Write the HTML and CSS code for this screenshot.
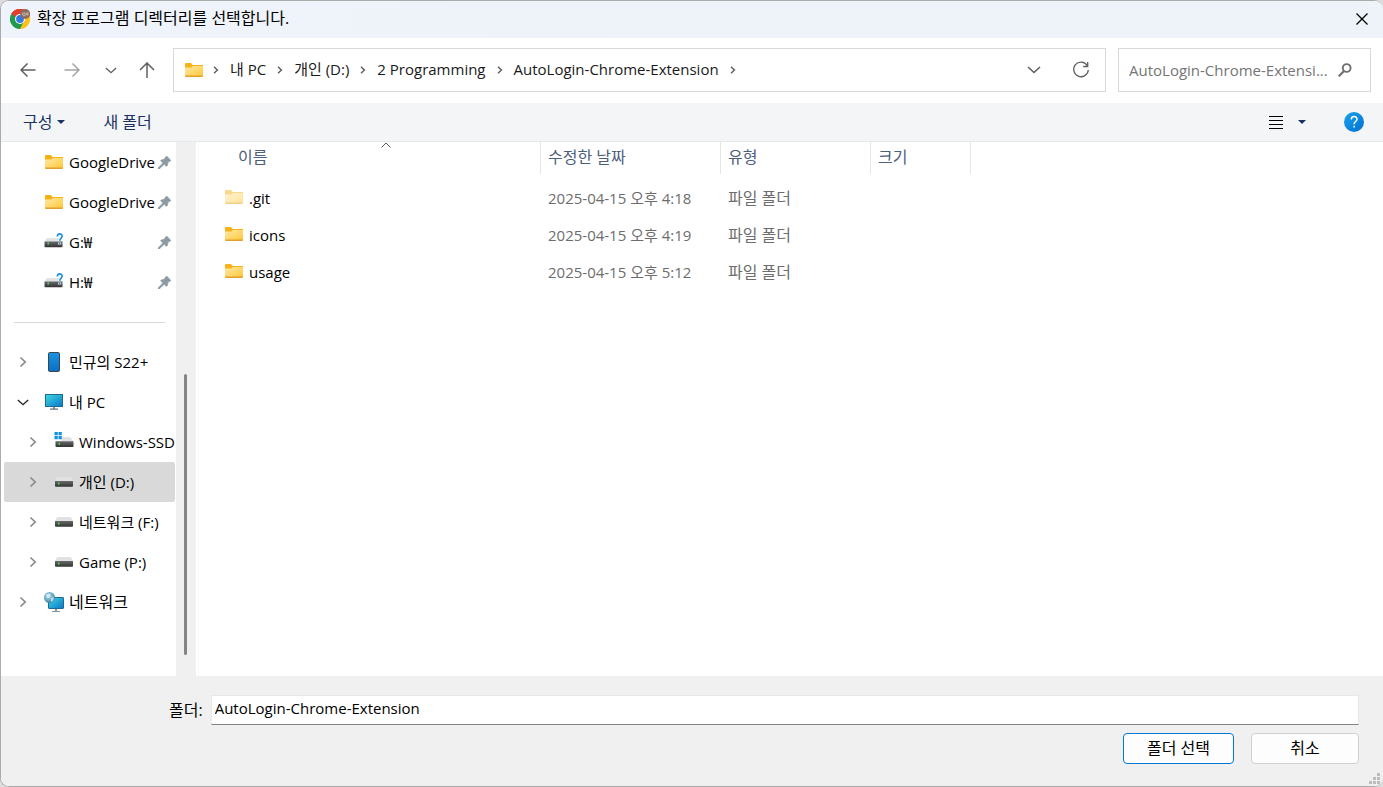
FILE: index.html
```html
<!DOCTYPE html>
<html lang="ko">
<head>
<meta charset="utf-8">
<title>확장 프로그램 디렉터리를 선택합니다.</title>
<link rel="stylesheet" href="styles.css">
</head>
<body>
<svg class="sprite" aria-hidden="true">
  <defs>
    <linearGradient id="g-folder" x1="0" y1="0" x2="1" y2="1"><stop offset="0" stop-color="#ffe9a6"/><stop offset="1" stop-color="#ffc83a"/></linearGradient>
    <linearGradient id="g-phone" x1="0" y1="0" x2="0" y2="1"><stop offset="0" stop-color="#1a93e0"/><stop offset="1" stop-color="#0a6fc4"/></linearGradient>
    <linearGradient id="g-screen" x1="0" y1="0" x2="1" y2="1"><stop offset="0" stop-color="#3ddbe0"/><stop offset="1" stop-color="#0b74c9"/></linearGradient>
    <linearGradient id="g-drive" x1="0" y1="0" x2="0" y2="1"><stop offset="0" stop-color="#6a6a6a"/><stop offset="1" stop-color="#333"/></linearGradient>
    <linearGradient id="g-help" x1="0" y1="0" x2="1" y2="1"><stop offset="0" stop-color="#1ba1ea"/><stop offset="1" stop-color="#0071d1"/></linearGradient>
    <radialGradient id="g-globe" cx=".4" cy=".35" r=".7"><stop offset="0" stop-color="#b5dcec"/><stop offset="1" stop-color="#2f83ad"/></radialGradient>
    <symbol id="folder" viewBox="0 0 18 14"><path d="M0 1q0-1 1-1h5l1.500 2H18v6H0z" fill="#f7b21a"/><path d="M0 4.500h6.500L8 3h10v10H0z" fill="url(#g-folder)"/><path d="M0 12.500h18v.5q0 1-1 1H1q-1 0-1-1z" fill="#e3a025"/></symbol>
    <symbol id="drive" viewBox="0 0 18 10"><path d="M3 0h12q1 0 1.500 1L18 4H0l1.500-3Q2 0 3 0z" fill="#e0e2e4"/><path d="M0 4h18v5q0 .8-.8.8H.8Q0 9.800 0 9z" fill="url(#g-drive)"/><rect x="3" y="5.500" width="1.500" height="2" fill="#4be04b"/></symbol>
    <symbol id="drive-unknown" viewBox="0 0 19 15"><path d="M3 5h12q1 0 1.500 1L18 9H0l1.500-3Q2 5 3 5z" fill="#e0e2e4"/><path d="M0 8.500h18v5q0 .8-.8.8H.8q-.8 0-.8-.8z" fill="url(#g-drive)"/><rect x="3" y="9.500" width="1.500" height="2" fill="#4be04b"/><path d="M12.800 3.500C12.800 0 17.600 0 17.600 3.200c0 2.200-2.400 2.300-2.400 4.600M15.200 9.500v2" fill="none" stroke="#fff" stroke-width="3"/><path d="M12.800 3.500C12.800 0 17.600 0 17.600 3.200c0 2.200-2.400 2.300-2.400 4.600M15.200 9.500v1.700" fill="none" stroke="#1a8fe0" stroke-width="1.600"/></symbol>
    <symbol id="drive-windows" viewBox="0 0 19 16"><path d="M7 5h8q1 0 1.500 1L19 9.500H1V9h6z" fill="#e0e2e4"/><path d="M1 9.200h18v5q0 .8-.8.8H1.800q-.8 0-.8-.8z" fill="url(#g-drive)"/><rect x="4" y="10.800" width="1.500" height="2" fill="#4be04b"/><path d="M0 0h3.300v3.300H0zM4 0h3.300v3.300H4zM0 4h3.300v3.300H0zM4 4h3.300v3.300H4z" fill="#1490df"/></symbol>
    <symbol id="phone" viewBox="0 0 12 20"><rect x=".5" y=".5" width="11" height="19" rx="1.200" fill="url(#g-phone)" stroke="#3d4650"/></symbol>
    <symbol id="pc" viewBox="0 0 18 16"><rect x=".5" y=".5" width="17" height="12" fill="url(#g-screen)" stroke="#1d6a94"/><path d="M8 13h2v2H8z" fill="#8c959c"/><path d="M5 14.500h8v1.200H5z" fill="#626c74"/></symbol>
    <symbol id="network" viewBox="0 0 20 20"><rect x="4.500" y="5.500" width="15" height="11" rx=".5" fill="url(#g-screen)" stroke="#1d6a94"/><path d="M11 17h2v2h3v1H8v-1h3z" fill="#8c959c"/><circle cx="5.500" cy="5.500" r="5.500" fill="url(#g-globe)"/><path d="M2 2.500l3-1 2 1.500-1.500 3L3 6zM7 6l3-1-1 4-2 1z" fill="#e5f4f8" opacity=".7"/></symbol>
    <symbol id="pin" viewBox="0 0 13 13"><path d="M7.800.6Q8.400-.1 9.100.5L12.500 3.900Q13.200 4.600 12.400 5L10 6.300 9.400 9.600Q8.800 10.700 7.900 9.900L6.200 8.300 1.300 13H0v-1L4.800 6.900 2.900 5.100Q2.300 4.300 3.300 4L6.600 3z" fill="#8e9aa3" stroke="#8e9aa3" stroke-width=".6"/></symbol>
    <symbol id="chevron" viewBox="0 0 8 12"><path d="M1.500 1.500L6.200 6l-4.700 4.500" fill="none" stroke="currentColor" stroke-width="1.700"/></symbol>
    <symbol id="chevron-small" viewBox="0 0 6 8"><path d="M1 .8L4.400 4 1 7.200" fill="none" stroke="currentColor" stroke-width="1.500"/></symbol>
    <symbol id="chevron-down" viewBox="0 0 14 8"><path d="M1 1l6 5.500L13 1" fill="none" stroke="currentColor" stroke-width="1.600"/></symbol>
    <symbol id="arrow" viewBox="0 0 16 14"><path d="M15.500 7H1M7.500.5L1 7l6.500 6.500" fill="none" stroke="currentColor" stroke-width="1.500"/></symbol>
  </defs>
</svg>

<div class="dialog" role="dialog" aria-labelledby="dialog-title">
  <header class="titlebar">
    <svg class="app-icon" viewBox="0 0 20 20" width="20" height="20" aria-hidden="true">
      <path d="M10 10L1.300 5A10 10 0 0 1 18.700 5z" fill="#e33b2e"/>
      <path d="M10 10L10 20A10 10 0 0 1 1.300 5z" fill="#229a4b"/>
      <path d="M10 10L18.700 5A10 10 0 0 1 10 20z" fill="#fbc116"/>
      <path d="M1.300 5L6 12.200 10 10 10 5.500z" fill="#229a4b"/>
      <path d="M1.300 5A10 10 0 0 1 18.700 5H10L6 8z" fill="#e33b2e"/>
      <path d="M14 12L10 20 6 13z" fill="#229a4b"/>
      <circle cx="10" cy="10" r="5" fill="#fff"/><circle cx="10" cy="10" r="3.900" fill="#3178e8"/>
      <circle cx="15.200" cy="5" r="5" fill="#8c6a5e"/>
      <path d="M12 3.500l1.200 1.300-1.200 1.300M14.200 3.300v2.200M13 6.700h2.500M15.500 4.200h1.500M17.800 3.200v3.500M15.500 5.500h1.800" stroke="#e8dcd8" stroke-width=".7" fill="none"/>
    </svg>
    <h1 id="dialog-title">확장 프로그램 디렉터리를 선택합니다.</h1>
    <button class="close" aria-label="닫기"><svg viewBox="0 0 12 12" width="12" height="12"><path d="M.5.5l11 11M11.500.5l-11 11" stroke="#000" stroke-width="1.300"/></svg></button>
  </header>

  <div class="navbar">
    <div class="history">
      <button aria-label="뒤로"><svg width="16" height="14"><use href="#arrow"/></svg></button>
      <button aria-label="앞으로" disabled><svg class="flip" width="16" height="14"><use href="#arrow"/></svg></button>
      <button class="recent" aria-label="최근 위치"><svg width="12" height="7"><use href="#chevron-down"/></svg></button>
      <button class="up" aria-label="위로"><svg width="16" height="16" viewBox="0 0 16 16"><path d="M8 16V1M1 8l7-7 7 7" fill="none" stroke="currentColor" stroke-width="1.500"/></svg></button>
    </div>
    <nav class="address" aria-label="주소">
      <svg class="address-icon" width="18" height="14" aria-hidden="true"><use href="#folder"/></svg>
      <ol class="crumbs">
        <li><svg width="6" height="8"><use href="#chevron-small"/></svg><a href="#">내 PC</a></li>
        <li><svg width="6" height="8"><use href="#chevron-small"/></svg><a href="#">개인 (D:)</a></li>
        <li><svg width="6" height="8"><use href="#chevron-small"/></svg><a href="#">2 Programming</a></li>
        <li><svg width="6" height="8"><use href="#chevron-small"/></svg><a href="#">AutoLogin-Chrome-Extension</a></li>
        <li><svg width="6" height="8"><use href="#chevron-small"/></svg></li>
      </ol>
      <button aria-label="이전 위치"><svg width="14" height="8"><use href="#chevron-down"/></svg></button>
      <button aria-label="새로 고침"><svg width="18" height="18" viewBox="0 0 18 18"><path d="M15.200 4.500A7.300 7.300 0 1 0 16.300 9M15.700 1v4.500h-4.500" fill="none" stroke="currentColor" stroke-width="1.300"/></svg></button>
    </nav>
    <label class="search">
      <input type="text" aria-label="검색" placeholder="AutoLogin-Chrome-Extensi...">
      <svg width="14" height="14" viewBox="0 0 14 14" aria-hidden="true"><circle cx="8.700" cy="5" r="3.900" fill="none" stroke="#6f6f6f" stroke-width="1.900"/><path d="M6 8L.7 13.300" stroke="#6f6f6f" stroke-width="2.200"/></svg>
    </label>
  </div>

  <div class="toolbar">
    <button class="organize">구성<svg width="8" height="4" viewBox="0 0 8 4"><path d="M0 0h8L4 4z" fill="#1b3260"/></svg></button>
    <button>새 폴더</button>
    <div class="toolbar-right">
      <button aria-label="보기"><svg width="14" height="14" viewBox="0 0 14 14"><path d="M0 1.500h14M0 5.500h14M0 9.500h14M0 13.500h14" stroke="#000"/></svg></button>
      <button aria-label="보기 옵션"><svg width="8" height="4" viewBox="0 0 8 4"><path d="M0 0h8L4 4z" fill="#1b3260"/></svg></button>
      <button class="help" aria-label="도움말"><svg width="20" height="20" viewBox="0 0 20 20"><circle cx="10" cy="10" r="10" fill="url(#g-help)"/><path d="M7.300 7.400C7.300 3.600 13 3.600 13 7.200c0 2.300-2.900 2.400-2.900 5M10.100 13.700v1.800" fill="none" stroke="#fff" stroke-width="1.500"/></svg></button>
    </div>
  </div>

  <main class="content">
    <nav class="sidebar" aria-label="탐색 창">
      <ul class="tree">
        <li class="item"><svg class="icon" height="14"><use href="#folder"/></svg><a href="#">GoogleDrive</a><svg class="pin"><use href="#pin"/></svg></li>
        <li class="item"><svg class="icon" height="14"><use href="#folder"/></svg><a href="#">GoogleDrive</a><svg class="pin"><use href="#pin"/></svg></li>
        <li class="item"><svg class="icon raised" height="15"><use href="#drive-unknown"/></svg><a href="#">G:₩</a><svg class="pin"><use href="#pin"/></svg></li>
        <li class="item"><svg class="icon raised" height="15"><use href="#drive-unknown"/></svg><a href="#">H:₩</a><svg class="pin"><use href="#pin"/></svg></li>
        <li class="divider" role="separator"></li>
        <li class="item"><button aria-label="펼치기"><svg width="8" height="12"><use href="#chevron"/></svg></button><svg class="icon" height="20"><use href="#phone"/></svg><a href="#">민규의 S22+</a></li>
        <li class="item"><button class="open" aria-label="접기"><svg width="12" height="7"><use href="#chevron-down"/></svg></button><svg class="icon" height="16"><use href="#pc"/></svg><a href="#">내 PC</a></li>
        <li class="item child"><button aria-label="펼치기"><svg width="8" height="12"><use href="#chevron"/></svg></button><svg class="icon raised" height="16"><use href="#drive-windows"/></svg><a href="#">Windows-SSD</a></li>
        <li class="item child selected"><button aria-label="펼치기"><svg width="8" height="12"><use href="#chevron"/></svg></button><svg class="icon" height="10"><use href="#drive"/></svg><a href="#" aria-current="true">개인 (D:)</a></li>
        <li class="item child"><button aria-label="펼치기"><svg width="8" height="12"><use href="#chevron"/></svg></button><svg class="icon" height="10"><use href="#drive"/></svg><a href="#">네트워크 (F:)</a></li>
        <li class="item child"><button aria-label="펼치기"><svg width="8" height="12"><use href="#chevron"/></svg></button><svg class="icon" height="10"><use href="#drive"/></svg><a href="#">Game (P:)</a></li>
        <li class="item"><button aria-label="펼치기"><svg width="8" height="12"><use href="#chevron"/></svg></button><svg class="icon" height="20"><use href="#network"/></svg><a class="hangul" href="#">네트워크</a></li>
      </ul>
    </nav>
    <div class="scrollbar" aria-hidden="true"><span class="thumb"></span></div>
    <section class="files">
      <table>
        <colgroup><col class="col-name"><col class="col-date"><col class="col-type"><col class="col-size"></colgroup>
        <thead>
          <tr>
            <th scope="col"><div class="head">이름<svg class="sort" width="10" height="6" viewBox="0 0 10 6"><path d="M.5 5.500L5 1l4.500 4.500" fill="none" stroke="#555"/></svg></div></th>
            <th scope="col"><div class="head">수정한 날짜</div></th>
            <th scope="col"><div class="head">유형</div></th>
            <th scope="col"><div class="head">크기</div></th>
          </tr>
        </thead>
        <tbody>
          <tr><td class="name"><div class="file"><svg class="dim" width="18" height="14"><use href="#folder"/></svg>.git</div></td><td>2025-04-15 오후 4:18</td><td class="hangul">파일 폴더</td><td></td></tr>
          <tr><td class="name"><div class="file"><svg width="18" height="14"><use href="#folder"/></svg>icons</div></td><td>2025-04-15 오후 4:19</td><td class="hangul">파일 폴더</td><td></td></tr>
          <tr><td class="name"><div class="file"><svg width="18" height="14"><use href="#folder"/></svg>usage</div></td><td>2025-04-15 오후 5:12</td><td class="hangul">파일 폴더</td><td></td></tr>
        </tbody>
      </table>
    </section>
  </main>

  <footer class="footer">
    <div class="field">
      <label class="hangul" for="folder-name">폴더:</label>
      <input id="folder-name" type="text" value="AutoLogin-Chrome-Extension">
    </div>
    <div class="actions">
      <button class="primary">폴더 선택</button>
      <button class="cancel">취소</button>
    </div>
    <svg class="grip" width="11" height="11" viewBox="0 0 11 11" aria-hidden="true"><path d="M8 0h3v3H8zM4 4h3v3H4zM8 4h3v3H8zM0 8h3v3H0zM4 8h3v3H4zM8 8h3v3H8z" fill="#bdbdbd"/></svg>
  </footer>
</div>
</body>
</html>
```

FILE: styles.css
```css
* { box-sizing: border-box; }

body {
  margin: 0;
  background: #dcdcdc;
  color: #000;
  font: 15px/20px "Open Sans", "Noto Sans CJK KR", sans-serif;
}

button, input { font: inherit; color: inherit; }
button { padding: 0; border: 0; background: none; }
svg { display: block; flex: none; }
a { color: inherit; text-decoration: none; }
ul, ol { margin: 0; padding: 0; list-style: none; }
.sprite { position: absolute; width: 0; height: 0; }
.hangul, .titlebar h1, .toolbar, th, .actions button { font-size: 16px; }

.dialog {
  display: flex;
  flex-direction: column;
  min-height: 100vh;
  overflow: hidden;
  border: 1px solid #ababab;
  border-right: 0;
  border-radius: 9px;
  background: #fff;
}

/* Title bar */
.titlebar {
  display: flex;
  align-items: center;
  height: 37px;
  padding: 0 15px 2px 9px;
  background: linear-gradient(90deg, #eff3fb, #edf3f8);
}
.titlebar h1 { flex: 1; margin: 0 0 0 7px; padding-bottom: 2px; font-weight: 400; }

/* Navigation row */
.navbar {
  display: flex;
  align-items: center;
  gap: 12px;
  padding: 10px 12px 11px 19px;
}
.history { display: flex; align-items: center; gap: 28px; width: 141px; color: #606060; }
.history button:disabled { color: #a5a5a5; }
.history .recent { margin-left: -3px; }
.history .up { margin-left: -6px; }
.flip { transform: scaleX(-1); }

.address {
  display: flex;
  flex: 1;
  align-items: center;
  height: 44px;
  padding: 0 15px 0 11px;
  border: 1px solid #d9d9d9;
  color: #606060;
}
.address > button { display: grid; place-items: center; height: 42px; }
.address > button + button { margin-left: 31px; }
.crumbs { display: flex; flex: 1; margin-left: 10px; }
.crumbs li { display: flex; align-items: center; gap: 11px; margin-right: 11px; }
.crumbs a { padding-bottom: 2px; color: #1a1a1a; }

.search {
  display: flex;
  align-items: center;
  width: 253px;
  height: 44px;
  padding: 0 18px 0 10px;
  border: 1px solid #d9d9d9;
}
.search input { flex: 1; min-width: 0; padding: 0; border: 0; outline: 0; background: none; }
.search input::placeholder { color: #757575; opacity: 1; }

/* Command bar */
.toolbar {
  display: flex;
  align-items: center;
  gap: 38px;
  height: 39px;
  padding: 0 19px 0 22px;
  border-bottom: 1px solid #e7e8ea;
  background: #f4f5f7;
  color: #1b3260;
}
.organize { display: flex; align-items: center; gap: 5px; }
.toolbar-right { display: flex; align-items: center; gap: 15px; margin-left: auto; }
.help { margin-left: 23px; }

/* Body */
.content { display: flex; flex: 1; }
.sidebar { width: 175px; padding-left: 3px; }
.item {
  display: flex;
  align-items: center;
  height: 40px;
  margin-right: 1px;
  border-radius: 2px;
  padding-left: 40px;
  white-space: nowrap;
}
.item:has(button) { padding-left: 12px; }
.item.child:has(button) { padding-left: 22px; }
.item button { display: grid; place-items: center; width: 14px; margin-right: 14px; color: #8a8a8a; }
.item button.open { color: #222; }
.item a { margin-left: 5px; }
.icon { width: 20px; }
.raised { margin-bottom: 4px; }
.pin { width: 13px; height: 13px; margin-left: auto; margin-right: 4px; }
.selected { background: #d9d9d9; }
.divider { height: 40px; margin: 0 11px 0 10px; background: linear-gradient(#d9d9d9, #d9d9d9) center / 100% 1px no-repeat; }

.scrollbar { display: flex; justify-content: center; width: 20px; padding: 232px 2px 21px 0; background: #f0f0f0; }
.thumb { width: 3px; border-radius: 2px; background: #858585; }

.files { flex: 1; margin-left: 2px; border-left: 1px solid #f7f7f7; }
table { width: 772px; table-layout: fixed; border-collapse: collapse; }
.col-name { width: 342px; }
.col-date { width: 180px; }
.col-type { width: 150px; }
.col-size { width: 100px; }
th { height: 37px; padding: 0; vertical-align: top; font-weight: 400; text-align: left; color: #4c607a; }
.head { position: relative; height: 32px; padding: 5px 0 0 7px; border-right: 1px solid #e5e5e5; }
th:first-child .head { padding-left: 39px; }
.sort { position: absolute; top: 0; left: 50%; margin-left: 11px; }
td { height: 37px; padding: 0 0 0 7px; color: #6d6d6d; }
td.name { padding-left: 26px; color: #000; }
.file { display: flex; align-items: center; gap: 6px; }
.file svg { margin-bottom: 2px; }
.dim { opacity: .5; }

/* Footer */
.footer { position: relative; padding: 19px 24px 22px 168px; background: #f0f0f0; }
.field { display: flex; align-items: center; gap: 8px; }
.field input {
  flex: 1;
  height: 30px;
  padding: 0 3px 4px;
  border: 1px solid #e8e8e8;
  border-bottom-color: #858585;
  outline: 0;
  background: #fff;
}
.actions { display: flex; justify-content: flex-end; gap: 17px; margin-top: 8px; }
.actions button { height: 31px; padding-bottom: 2px; border: 1px solid #d0d0d0; border-radius: 4px; background: #fdfdfd; }
.actions .primary { width: 111px; border-color: #0078d4; }
.actions .cancel { width: 108px; }
.grip { position: absolute; right: 3px; bottom: 2px; }
```
